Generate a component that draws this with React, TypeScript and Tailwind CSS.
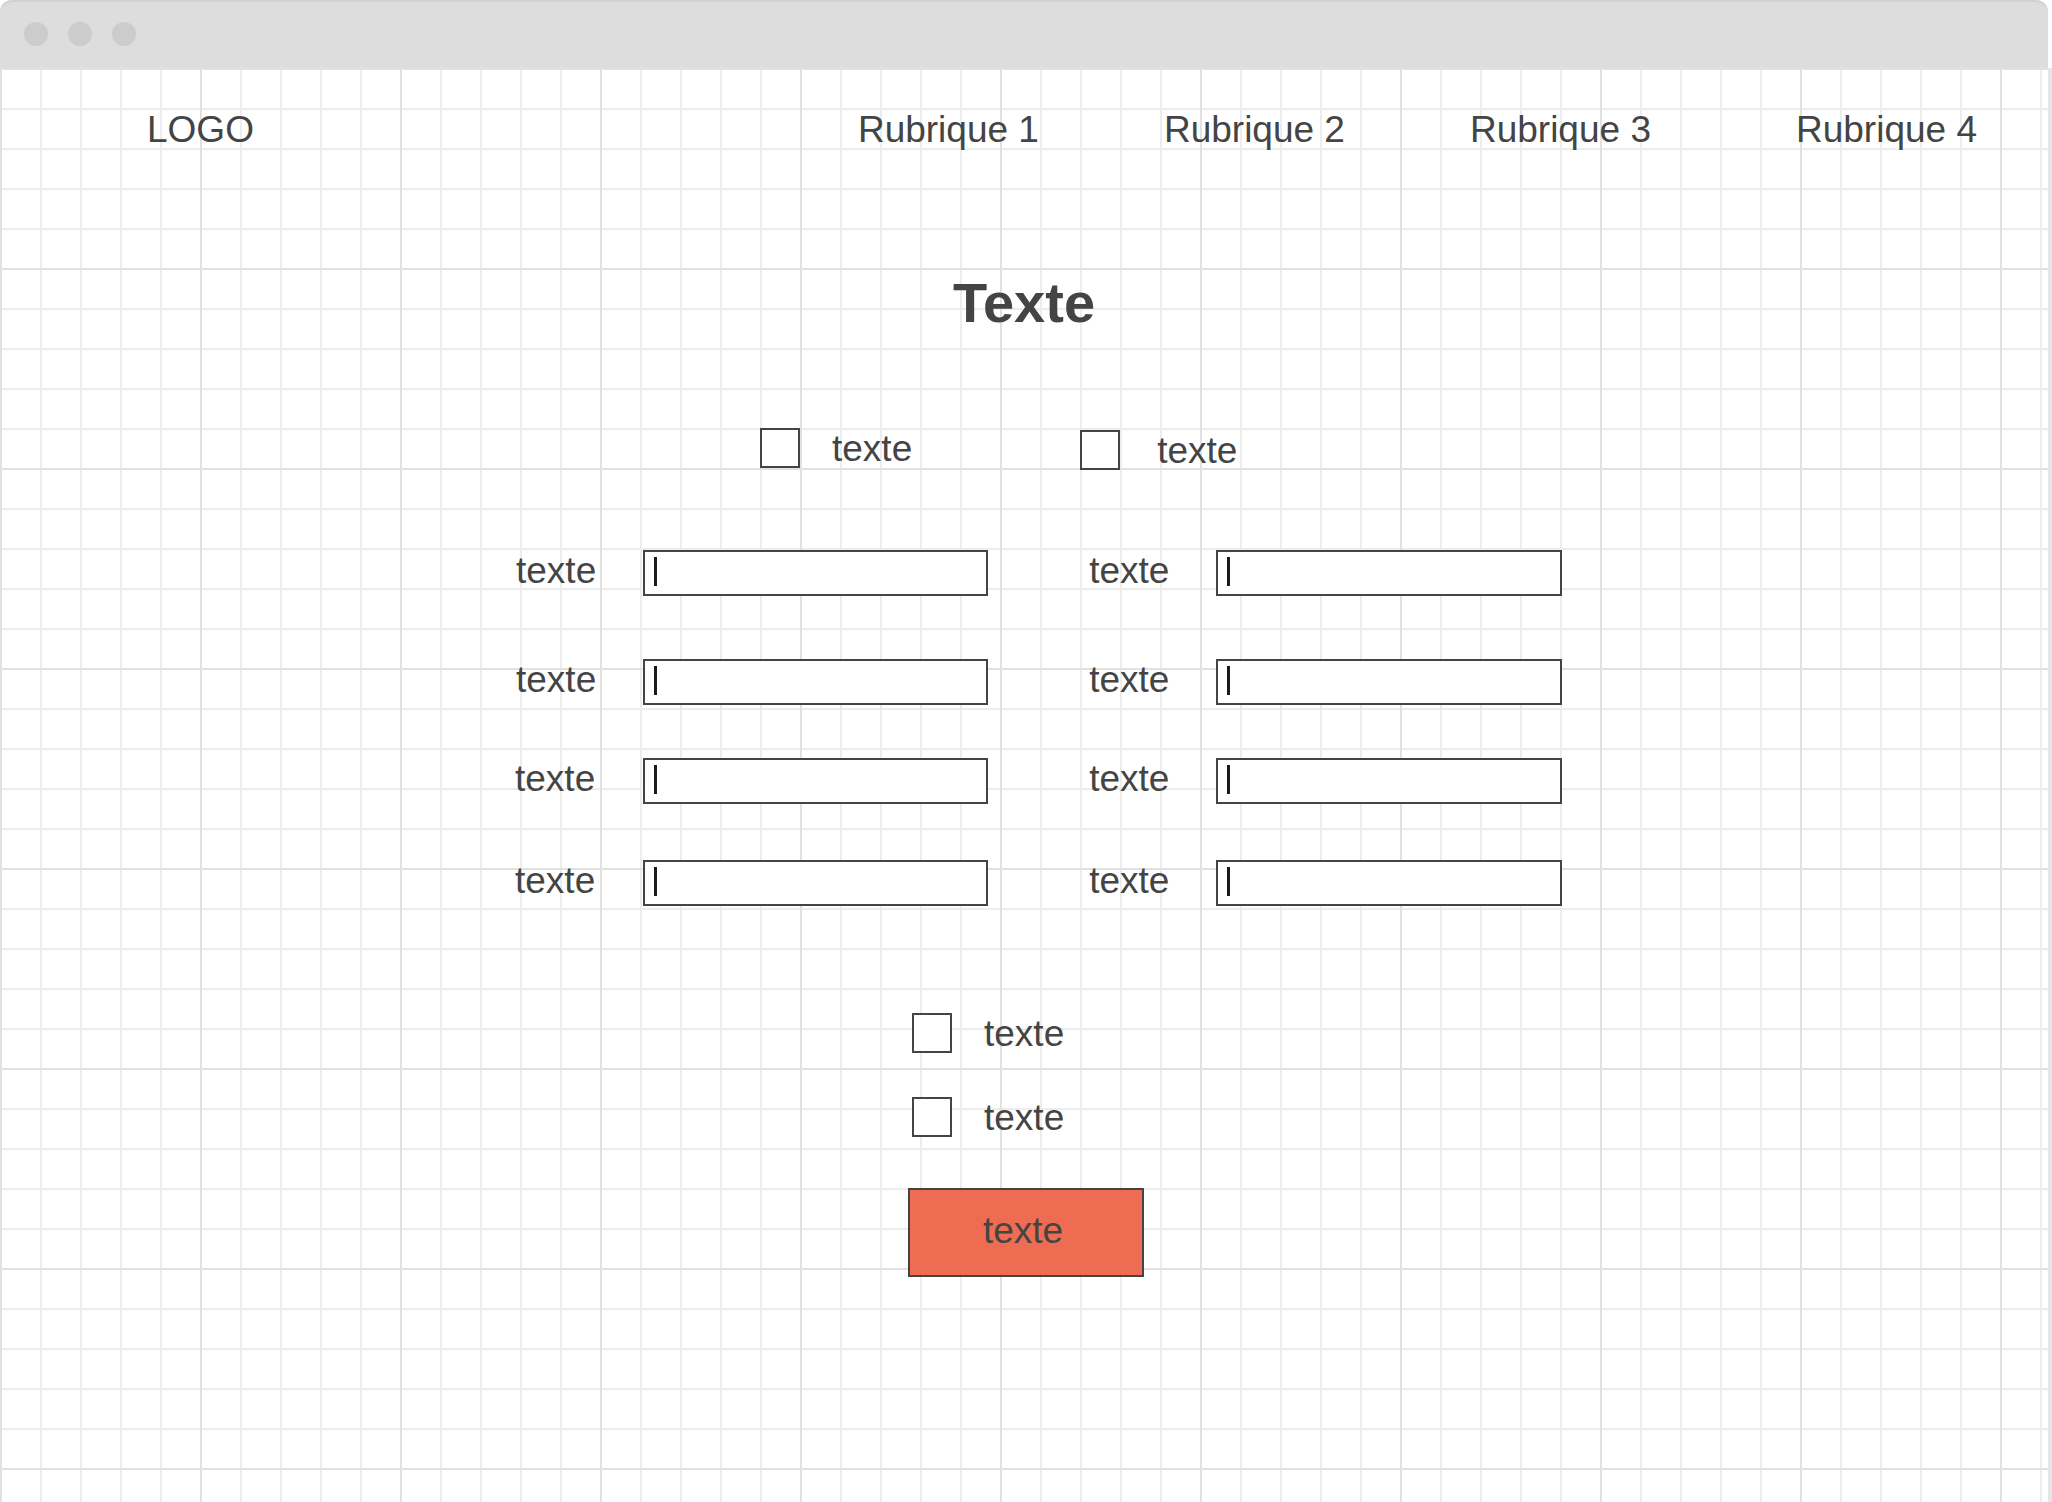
import React from "react";

function Box({ className = "" }: { className?: string }) {
  return <div className={"w-[40px] h-[40px] shrink-0 border-2 border-[#444444] bg-white " + className} />;
}

function Field({ className = "", width }: { className?: string; width: string }) {
  return (
    <div className={"h-[46px] shrink-0 border-2 border-[#444444] bg-white flex items-start pl-[9px] pt-[5px] " + width + " " + className}>
      <div className="w-[3px] h-[29px] bg-[#1a1a1a]" />
    </div>
  );
}

function InputRow({ top, leftShift = false }: { top: string; leftShift?: boolean }) {
  return (
    <div className={"flex items-start " + top}>
      <span className={"leading-[42px] shrink-0 " + (leftShift ? "ml-[515px]" : "ml-[516px]")}>texte</span>
      <Field className={leftShift ? "ml-[48px]" : "ml-[47px]"} width="w-[345px]" />
      <span className="leading-[42px] shrink-0 ml-[101px]">texte</span>
      <Field className="ml-[47px]" width="w-[346px]" />
    </div>
  );
}

export default function App() {
  return (
    <div className="w-[2052px] h-[1502px] overflow-hidden bg-white font-['Liberation_Sans',Arial,sans-serif] text-[#444444] flex flex-col">
      <div className="h-[68px] w-[2048px] shrink-0 bg-[#dddddd] rounded-t-[12px] shadow-[inset_0_2px_0_#d2d2d2] flex items-center pl-[24px] gap-[20px]">
        <span className="w-[24px] h-[24px] rounded-full bg-[#cccccc]" />
        <span className="w-[24px] h-[24px] rounded-full bg-[#cccccc]" />
        <span className="w-[24px] h-[24px] rounded-full bg-[#cccccc]" />
      </div>
      <div className="flex-1 w-[2052px] border-r-4 border-[#e6e6e6] bg-[linear-gradient(to_right,#e1e1e1_2px,transparent_2px),linear-gradient(to_bottom,#e1e1e1_2px,transparent_2px),linear-gradient(to_right,#ededed_2px,transparent_2px),linear-gradient(to_bottom,#ededed_2px,transparent_2px)] [background-size:200px_200px,200px_200px,40px_40px,40px_40px] flex flex-col text-[37px]">
        <nav className="flex items-start pt-[42px] leading-[40px]">
          <span className="ml-[147px] shrink-0">LOGO</span>
          <span className="ml-[604px] shrink-0">Rubrique 1</span>
          <span className="ml-[125px] shrink-0">Rubrique 2</span>
          <span className="ml-[125px] shrink-0">Rubrique 3</span>
          <span className="ml-[145px] shrink-0">Rubrique 4</span>
        </nav>

        <h1 className="mt-[123px] text-center text-[56px] font-bold leading-[60px]">Texte</h1>

        <div className="mt-[95px] flex items-start">
          <Box className="ml-[760px]" />
          <span className="ml-[32px] leading-[42px] shrink-0">texte</span>
          <Box className="ml-[168px] mt-[2px]" />
          <span className="ml-[37px] mt-[2px] leading-[42px] shrink-0">texte</span>
        </div>

        <InputRow top="mt-[78px]" />
        <InputRow top="mt-[63px]" />
        <InputRow top="mt-[53px]" leftShift />
        <InputRow top="mt-[56px]" leftShift />

        <div className="mt-[107px] flex items-start">
          <Box className="ml-[912px]" />
          <span className="ml-[32px] leading-[42px] shrink-0">texte</span>
        </div>
        <div className="mt-[42px] flex items-start">
          <Box className="ml-[912px]" />
          <span className="ml-[32px] leading-[42px] shrink-0">texte</span>
        </div>

        <div className="mt-[49px] flex items-start">
          <button className="ml-[908px] w-[236px] h-[89px] shrink-0 bg-[#ee6c52] border-2 border-[#444444] flex items-center justify-center pr-[6px] pb-[3px] leading-[40px] text-[#444444]">
            texte
          </button>
        </div>
      </div>
    </div>
  );
}
